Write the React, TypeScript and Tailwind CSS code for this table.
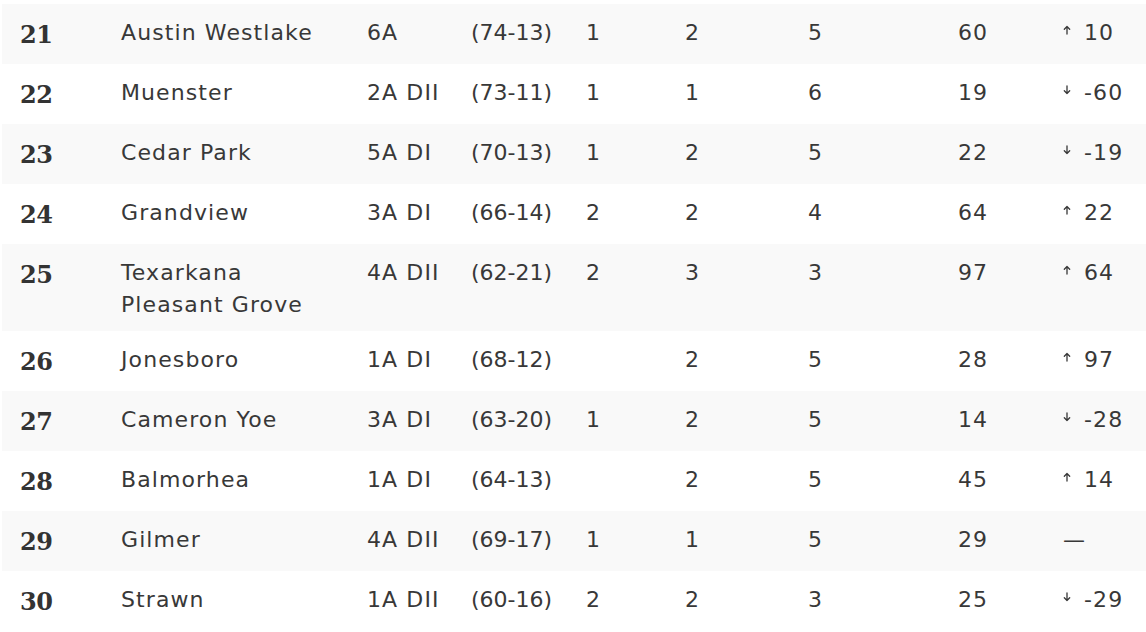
import React from 'react';

type Row = {
  rank: number;
  school: string;
  cls: string;
  record: string;
  a: string;
  b: string;
  c: string;
  prev: string;
  change: number | null;
};

const rows: Row[] = [
  { rank: 21, school: 'Austin Westlake', cls: '6A', record: '(74-13)', a: '1', b: '2', c: '5', prev: '60', change: 10 },
  { rank: 22, school: 'Muenster', cls: '2A DII', record: '(73-11)', a: '1', b: '1', c: '6', prev: '19', change: -60 },
  { rank: 23, school: 'Cedar Park', cls: '5A DI', record: '(70-13)', a: '1', b: '2', c: '5', prev: '22', change: -19 },
  { rank: 24, school: 'Grandview', cls: '3A DI', record: '(66-14)', a: '2', b: '2', c: '4', prev: '64', change: 22 },
  { rank: 25, school: 'Texarkana Pleasant Grove', cls: '4A DII', record: '(62-21)', a: '2', b: '3', c: '3', prev: '97', change: 64 },
  { rank: 26, school: 'Jonesboro', cls: '1A DI', record: '(68-12)', a: '', b: '2', c: '5', prev: '28', change: 97 },
  { rank: 27, school: 'Cameron Yoe', cls: '3A DI', record: '(63-20)', a: '1', b: '2', c: '5', prev: '14', change: -28 },
  { rank: 28, school: 'Balmorhea', cls: '1A DI', record: '(64-13)', a: '', b: '2', c: '5', prev: '45', change: 14 },
  { rank: 29, school: 'Gilmer', cls: '4A DII', record: '(69-17)', a: '1', b: '1', c: '5', prev: '29', change: null },
  { rank: 30, school: 'Strawn', cls: '1A DII', record: '(60-16)', a: '2', b: '2', c: '3', prev: '25', change: -29 },
];

const cell = 'align-top pl-[18px] pr-2 pt-[13px] pb-[10px] leading-[32px]';

// small thin arrow shown before the movement number
const Arrow = ({ up }: { up: boolean }) => (
  <svg
    width="8"
    height="10"
    viewBox="0 0 8 10"
    fill="none"
    stroke="currentColor"
    strokeWidth="1.3"
    strokeLinecap="round"
    strokeLinejoin="round"
    className="inline-block relative top-[-4px] mr-[13px]"
  >
    {up ? <path d="M4 9V1.5M1.3 4.2L4 1.5l2.7 2.7" /> : <path d="M4 1v7.5M1.3 5.8L4 8.5l2.7-2.7" />}
  </svg>
);

const Change = ({ value }: { value: number | null }) => {
  if (value === null) return <span>—</span>;
  return (
    <span>
      <Arrow up={value > 0} />
      {value}
    </span>
  );
};

export default function App() {
  return (
    <div className="bg-white min-h-screen pt-[4px] pl-[2px] overflow-hidden">
      <table
        className="table-fixed border-collapse w-[1144px] text-[#383838] text-[22px] tracking-[0.05em]"
        style={{ fontFamily: '"DejaVu Sans", sans-serif' }}
      >
        <colgroup>
          <col className="w-[101px]" />
          <col className="w-[246px]" />
          <col className="w-[104px]" />
          <col className="w-[115px]" />
          <col className="w-[99px]" />
          <col className="w-[123px]" />
          <col className="w-[150px]" />
          <col className="w-[105px]" />
          <col />
        </colgroup>
        <tbody>
          {rows.map((r, i) => (
            <tr key={r.rank} className={i % 2 === 0 ? 'bg-[#f9f9f9]' : 'bg-white'}>
              <td
                className="align-top pl-[18px] pt-[13px] pb-[11px] leading-[36px] text-[24px] font-bold tracking-[-0.02em] text-[#333]"
                style={{ fontFamily: '"DejaVu Serif", serif' }}
              >
                {r.rank}
              </td>
              <td className={cell}>{r.school}</td>
              <td className={cell}>{r.cls}</td>
              <td className={`${cell} tracking-normal`}>{r.record}</td>
              <td className={cell}>{r.a}</td>
              <td className={cell}>{r.b}</td>
              <td className={cell}>{r.c}</td>
              <td className={cell}>{r.prev}</td>
              <td className={cell}>
                <Change value={r.change} />
              </td>
            </tr>
          ))}
        </tbody>
      </table>
    </div>
  );
}
